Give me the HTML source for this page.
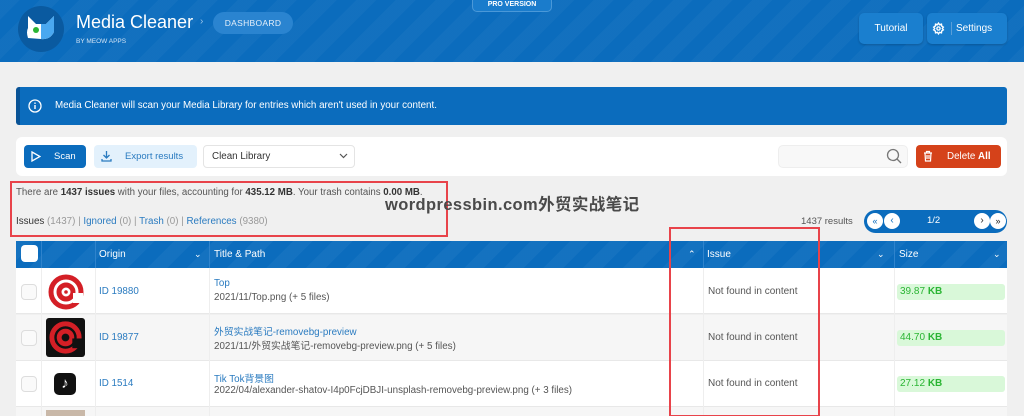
<!DOCTYPE html>
<html><head><meta charset="utf-8"><style>
*{box-sizing:border-box;margin:0;padding:0}
html,body{width:1024px;height:416px;overflow:hidden}
body{background:#f0f0f0;font-family:"Liberation Sans","Noto Sans CJK SC",sans-serif;font-size:10px;color:#444;position:relative}
.a{position:absolute}
.hdr{left:0;top:0;width:1024px;height:62px;background:#0b6cbd;background-image:repeating-linear-gradient(135deg,rgba(255,255,255,0.03) 0 14px,rgba(0,0,0,0) 14px 28px)}
.btn{background:#1a7fcf;border-radius:5px;color:#fff;font-size:10px;box-shadow:0 1px 2px rgba(0,0,0,.2)}
.th{color:#fff;font-size:10px;top:241px;height:27px;line-height:27px}
.row{left:16px;width:991px;height:46px;border-bottom:1px solid #e8e8e8}
.cb{width:16px;height:16px;border:1px solid #ddd;border-radius:4px;background:#fafafa}
.lnk{color:#2a7bc0}
.size{left:897px;width:108px;height:16px;background:#d9f8d9;border-radius:3px;color:#2bb534;line-height:16px;padding-left:3px;font-size:10px}
.iss{left:708px;font-size:10px;color:#555}
.vl{width:1px;background:#eee}
</style></head><body>
<div class="a hdr"></div>
<div class="a" style="left:472px;top:0;width:80px;height:12px;background:#1a7ccc;border:1px solid #4a98d8;border-top:none;border-radius:0 0 5px 5px;color:#fff;font-size:7px;font-weight:bold;text-align:center;line-height:10px">PRO VERSION</div>
<div class="a" style="left:18px;top:6px;width:46px;height:46px;border-radius:50%;background:#0a5aa0"></div>
<svg class="a" style="left:24px;top:14px" width="34" height="28" viewBox="0 0 34 28"><path d="M4 2 L12 10 L22 10 L30 2 L30 18 Q26 26 17 25 L4 24 Q2 18 4 14 Z" fill="#fff"/><path d="M17 10 L22 10 L30 2 L30 18 Q26 26 17 25Z" fill="#4aa8f0"/><circle cx="12" cy="16" r="3" fill="#2bb534"/></svg>
<div class="a" style="left:76px;top:12px;color:#fff;font-size:18px">Media Cleaner</div>
<div class="a" style="left:76px;top:38px;color:#cfe2f5;font-size:6.5px">BY MEOW APPS</div>
<div class="a" style="left:200px;top:16px;color:#9cc4ea;font-size:10px">›</div>
<div class="a" style="left:213px;top:12px;width:80px;height:22px;border-radius:11px;background:#2a84d0;color:#e6f0fa;font-size:8.5px;text-align:center;line-height:22px;letter-spacing:.3px">DASHBOARD</div>
<div class="a btn" style="left:859px;top:13px;width:64px;height:31px;line-height:31px;text-align:center">Tutorial</div>
<div class="a btn" style="left:927px;top:13px;width:80px;height:31px;line-height:31px;padding-left:29px;font-size:10px">Settings</div>
<svg class="a" style="left:932px;top:22px" width="13" height="13" viewBox="0 0 24 24" fill="none" stroke="#fff" stroke-width="2.5"><circle cx="12" cy="12" r="3"/><path d="M12 2l2 3 3.5-1 .5 3.5 3 2-2 2.5 2 2.5-3 2-.5 3.5-3.5-1-2 3-2-3-3.5 1-.5-3.5-3-2 2-2.5-2-2.5 3-2L6.5 4 10 5z"/></svg>
<div class="a" style="left:951px;top:22px;width:1px;height:13px;background:#5a9ed8"></div>

<div class="a" style="left:16px;top:87px;width:991px;height:38px;background:#0b6cbd;border-left:4px solid #095396;border-radius:3px"></div>
<svg class="a" style="left:28px;top:99px" width="14" height="14" viewBox="0 0 14 14"><circle cx="7" cy="7" r="6" fill="none" stroke="#fff" stroke-width="1.3"/><rect x="6.3" y="6" width="1.4" height="4" fill="#fff"/><rect x="6.3" y="3.5" width="1.4" height="1.4" fill="#fff"/></svg>
<div class="a" style="left:55px;top:100px;color:#fff;font-size:9.8px">Media Cleaner will scan your Media Library for entries which aren't used in your content.</div>

<div class="a" style="left:16px;top:137px;width:991px;height:39px;background:#fff;border-radius:6px"></div>
<div class="a" style="left:24px;top:145px;width:62px;height:23px;background:#0b6cbd;border-radius:4px;color:#fff;line-height:23px;padding-left:30px;font-size:9.5px">Scan</div>
<svg class="a" style="left:31px;top:151px" width="10" height="11" viewBox="0 0 10 11"><path d="M1 1 L9 5.5 L1 10Z" fill="none" stroke="#fff" stroke-width="1.3"/></svg>
<div class="a" style="left:94px;top:145px;width:103px;height:23px;background:#e3f1fc;border-radius:4px;color:#2a7bc0;line-height:23px;padding-left:31px;font-size:9.5px">Export results</div>
<svg class="a" style="left:101px;top:150px" width="11" height="12" viewBox="0 0 11 12" fill="none" stroke="#2a7bc0" stroke-width="1.3"><path d="M5.5 1v7M2.5 5l3 3 3-3M1 9v2h9V9"/></svg>
<div class="a" style="left:203px;top:145px;width:152px;height:23px;background:#fff;border:1px solid #e4e4e4;border-radius:4px;color:#333;line-height:21px;padding-left:8px;font-size:9.8px">Clean Library</div>
<svg class="a" style="left:339px;top:153px" width="9" height="6" viewBox="0 0 9 6"><path d="M1 1l3.5 3.5L8 1" fill="none" stroke="#555" stroke-width="1.2"/></svg>
<div class="a" style="left:778px;top:145px;width:130px;height:23px;background:#f8f8f8;border:1px solid #eee;border-radius:5px"></div>
<svg class="a" style="left:886px;top:148px" width="16" height="16" viewBox="0 0 16 16" fill="none" stroke="#777" stroke-width="1.3"><circle cx="7" cy="7" r="5.5"/><path d="M11 11l4 4"/></svg>
<div class="a" style="left:916px;top:145px;width:85px;height:23px;background:#d5421a;border-radius:4px;color:#fff;line-height:23px;padding-left:31px;font-size:9.8px">Delete <b>All</b></div>
<svg class="a" style="left:923px;top:150px" width="10" height="12" viewBox="0 0 10 12" fill="none" stroke="#fff" stroke-width="1.2"><path d="M1 3h8M3.5 3V1.5h3V3M2 3l.5 8h5L8 3M4 5v4M6 5v4"/></svg>

<div class="a" style="left:16px;top:187px;font-size:9.7px;color:#555">There are <b style="color:#333">1437 issues</b> with your files, accounting for <b style="color:#333">435.12 MB</b>. Your trash contains <b style="color:#333">0.00 MB</b>.</div>
<div class="a" style="left:16px;top:216px;font-size:9.8px;color:#999"><span style="color:#333">Issues</span> (1437) | <span class="lnk">Ignored</span> (0) | <span class="lnk">Trash</span> (0) | <span class="lnk">References</span> (9380)</div>
<div class="a" style="left:10px;top:181px;width:438px;height:56px;border:2px solid #e8434a"></div>
<div class="a" style="left:385px;top:191px;font-size:16.5px;font-weight:bold;color:#4a4a4a;letter-spacing:.4px">wordpressbin.com外贸实战笔记</div>

<div class="a" style="left:801px;top:216px;font-size:9.5px;color:#555">1437 results</div>
<div class="a" style="left:864px;top:210px;width:143px;height:23px;background:#0b6cbd;border-radius:12px"></div>
<div class="a" style="left:867px;top:213px;width:16px;height:16px;border-radius:50%;background:#fff;color:#0b6cbd;font-size:9px;text-align:center;line-height:16px">«</div>
<div class="a" style="left:884px;top:213px;width:16px;height:16px;border-radius:50%;background:#fff;color:#0b6cbd;font-size:10px;text-align:center;line-height:15px">‹</div>
<div class="a" style="left:927px;top:215px;color:#fff;font-size:9.5px">1/2</div>
<div class="a" style="left:974px;top:213px;width:16px;height:16px;border-radius:50%;background:#fff;color:#222;font-size:10px;text-align:center;line-height:15px">›</div>
<div class="a" style="left:990px;top:213px;width:16px;height:16px;border-radius:50%;background:#fff;color:#222;font-size:9px;text-align:center;line-height:16px">»</div>

<div class="a" style="left:16px;top:241px;width:991px;height:27px;background:#0b6cbd;background-image:repeating-linear-gradient(135deg,rgba(255,255,255,0.04) 0 14px,rgba(0,0,0,0) 14px 28px)"></div>
<div class="a" style="left:21px;top:245px;width:17px;height:17px;background:#fff;border-radius:4px"></div>
<div class="a th" style="left:99px">Origin</div>
<div class="a th" style="left:194px;font-size:9px">⌄</div>
<div class="a th" style="left:214px">Title &amp; Path</div>
<div class="a th" style="left:688px;font-size:9px">⌃</div>
<div class="a th" style="left:707px">Issue</div>
<div class="a th" style="left:877px;font-size:9px">⌄</div>
<div class="a th" style="left:899px">Size</div>
<div class="a th" style="left:993px;font-size:9px">⌄</div>
<div class="a" style="left:41px;top:241px;width:1px;height:27px;background:#2f83cc"></div>
<div class="a" style="left:95px;top:241px;width:1px;height:27px;background:#2f83cc"></div>
<div class="a" style="left:209px;top:241px;width:1px;height:27px;background:#2f83cc"></div>
<div class="a" style="left:703px;top:241px;width:1px;height:27px;background:#2f83cc"></div>
<div class="a" style="left:894px;top:241px;width:1px;height:27px;background:#2f83cc"></div>

<div class="a row" style="top:268px;background:#fff"></div>
<div class="a row" style="top:315px;background:#f6f6f6"></div>
<div class="a row" style="top:361px;background:#fff"></div>
<div class="a row" style="top:407px;background:#f6f6f6"></div>
<div class="a vl" style="left:41px;top:268px;height:148px"></div>
<div class="a vl" style="left:95px;top:268px;height:148px"></div>
<div class="a vl" style="left:209px;top:268px;height:148px"></div>
<div class="a vl" style="left:703px;top:268px;height:148px"></div>
<div class="a vl" style="left:894px;top:268px;height:148px"></div>

<div class="a cb" style="left:21px;top:284px"></div>
<div class="a cb" style="left:21px;top:330px"></div>
<div class="a cb" style="left:21px;top:376px"></div>
<svg class="a" style="left:47px;top:273px" width="38" height="38" viewBox="0 0 38 38"><circle cx="19" cy="19" r="15" fill="none" stroke="#d41f26" stroke-width="5"/><circle cx="19" cy="19" r="7" fill="none" stroke="#d41f26" stroke-width="5"/><rect x="26" y="20" width="10" height="10" fill="#fff"/><circle cx="19" cy="19" r="1.8" fill="#d41f26"/></svg>
<div class="a" style="left:46px;top:318px;width:39px;height:39px;background:#111;border-radius:3px"></div>
<svg class="a" style="left:47px;top:319px" width="37" height="37" viewBox="0 0 38 38"><circle cx="19" cy="19" r="14" fill="none" stroke="#d41f26" stroke-width="5"/><circle cx="19" cy="19" r="6.5" fill="none" stroke="#d41f26" stroke-width="5"/><rect x="26" y="20" width="10" height="10" fill="#111"/></svg>
<div class="a" style="left:54px;top:373px;width:22px;height:22px;background:#111;border-radius:5px;color:#fff;font-size:15px;text-align:center;line-height:22px;font-weight:bold">♪</div>
<div class="a" style="left:46px;top:410px;width:39px;height:6px;background:#c9b8a8"></div>

<div class="a lnk" style="left:99px;top:286px;font-size:9.8px">ID 19880</div>
<div class="a lnk" style="left:99px;top:332px;font-size:9.8px">ID 19877</div>
<div class="a lnk" style="left:99px;top:378px;font-size:9.8px">ID 1514</div>
<div class="a lnk" style="left:214px;top:278px;font-size:9.8px">Top</div>
<div class="a" style="left:214px;top:292px;font-size:9.8px;color:#555">2021/11/Top.png (+ 5 files)</div>
<div class="a lnk" style="left:214px;top:324px;font-size:9.8px">外贸实战笔记-removebg-preview</div>
<div class="a" style="left:214px;top:338px;font-size:9.8px;color:#555">2021/11/外贸实战笔记-removebg-preview.png (+ 5 files)</div>
<div class="a lnk" style="left:214px;top:371px;font-size:9.8px">Tik Tok背景图</div>
<div class="a" style="left:214px;top:385px;font-size:9.8px;color:#555">2022/04/alexander-shatov-I4p0FcjDBJI-unsplash-removebg-preview.png (+ 3 files)</div>
<div class="a iss" style="top:286px">Not found in content</div>
<div class="a iss" style="top:332px">Not found in content</div>
<div class="a iss" style="top:378px">Not found in content</div>
<div class="a size" style="top:284px">39.87 <b>KB</b></div>
<div class="a size" style="top:330px">44.70 <b>KB</b></div>
<div class="a size" style="top:376px">27.12 <b>KB</b></div>
<div class="a" style="left:669px;top:227px;width:151px;height:190px;border:2px solid #e8434a"></div>
</body></html>
